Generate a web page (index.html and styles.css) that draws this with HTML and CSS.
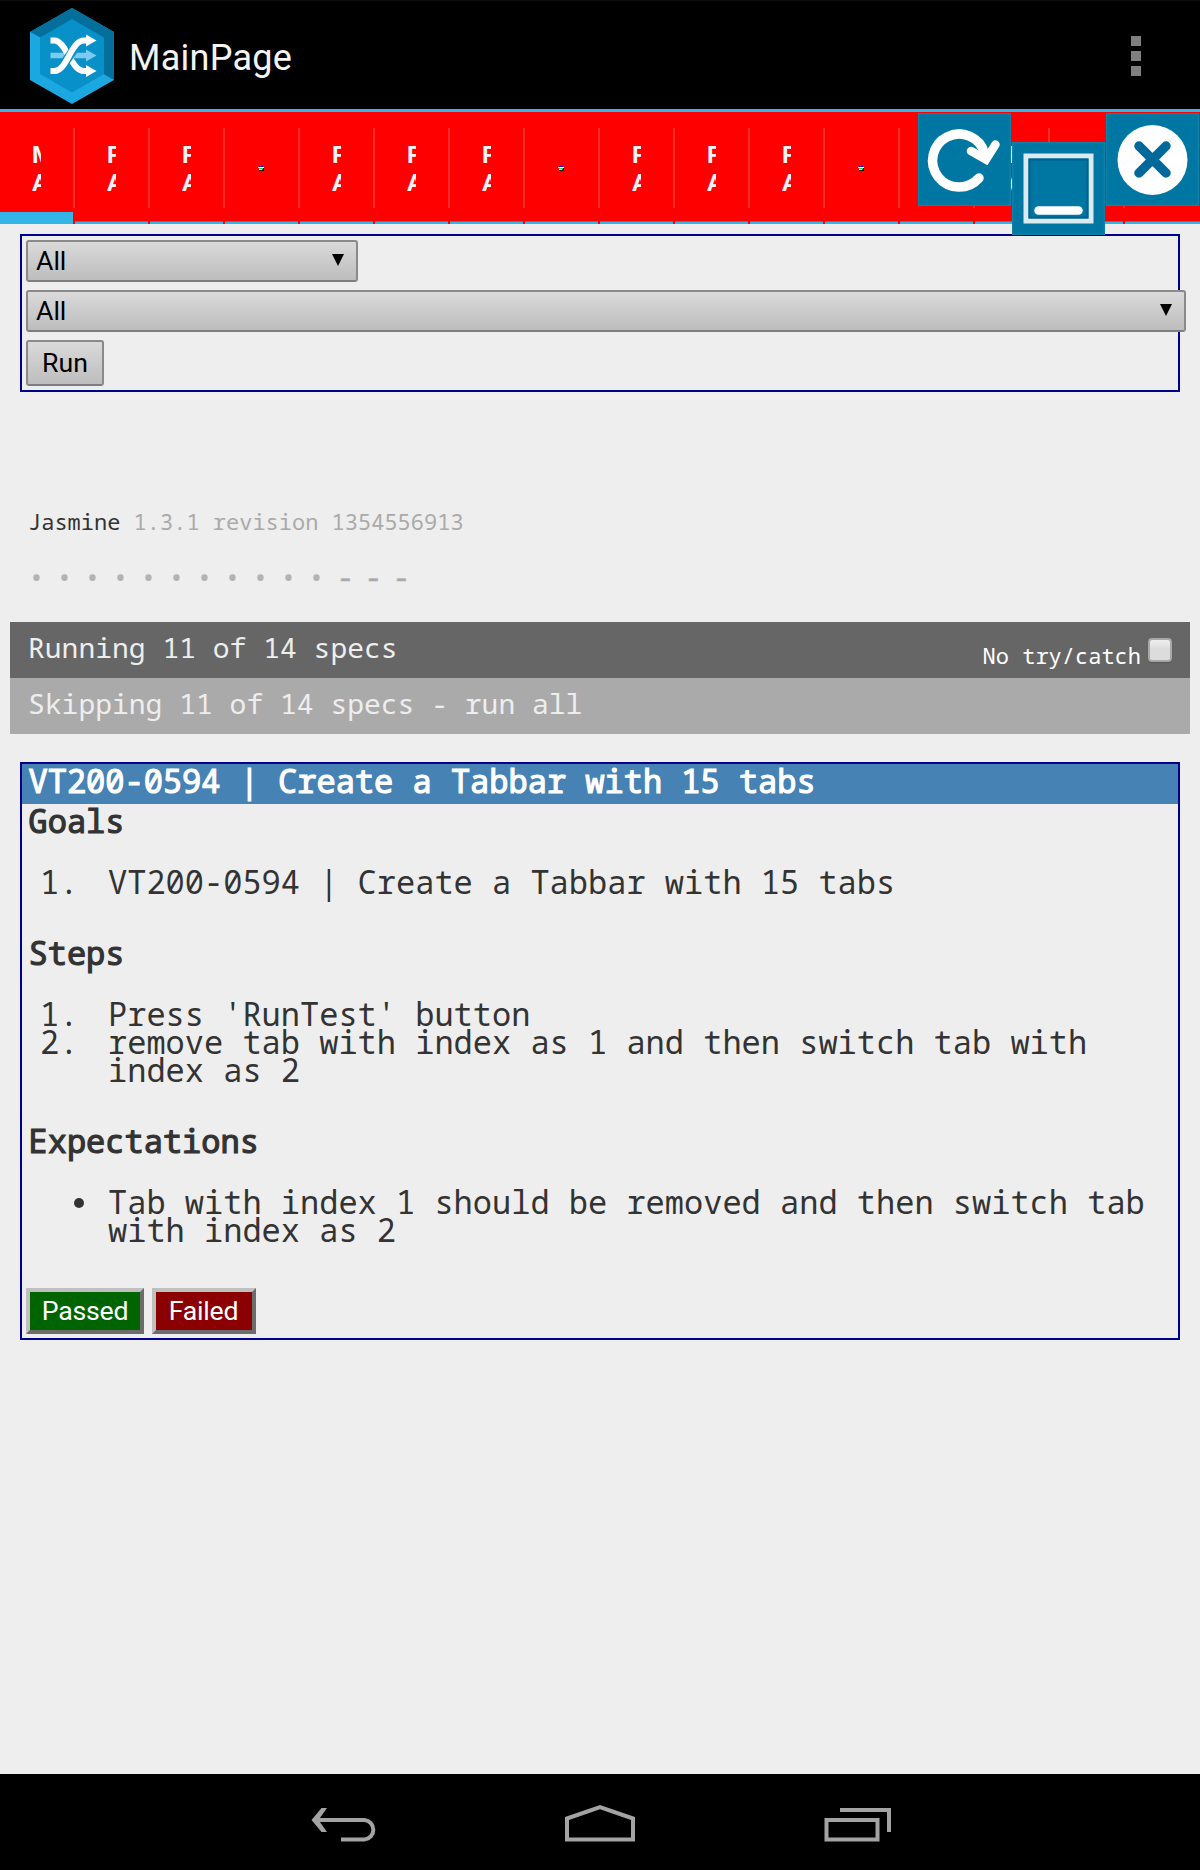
FILE: index.html
```html
<!DOCTYPE html>
<html lang="en">
<head>
<meta charset="utf-8">
<title>MainPage</title>
<link rel="stylesheet" href="styles.css">
</head>
<body>
<header class="appbar">
  <svg class="logo" width="84" height="96" viewBox="0 0 84 96">
    <path fill="#1ba8e1" d="M42 0 84 24V72L42 96 0 72V24z"/>
    <path fill="#056f9c" d="M0 24 42 0 84 24V72L42 48z"/>
    <path fill="#1ba8e1" d="M0 24 10 29.500V66z"/>
    <path fill="#0890c9" d="M42 11 74 29.500V66L42 84.500 10 66V29.500z"/>
    <path stroke="#7ccbee" stroke-width="5.500" d="M20.500 47.500H58"/>
    <path fill="#7ccbee" d="M56 41.500 66.500 47.500 56 53.500z"/>
    <g fill="none" stroke="#fff" stroke-width="6">
      <path d="M20.500 32.500h4C36 32.500 41 63 54 63h4"/>
      <path stroke="#0890c9" stroke-width="9" d="M33 57 47 37"/>
      <path d="M20.500 63h4C37 63 41 32.500 54 32.500h4"/>
    </g>
    <path fill="#fff" d="M56 26.500 66.500 32.500 56 38.500zM56 57 66.500 63 56 69z"/>
  </svg>
  <h1 class="title">MainPage</h1>
  <div class="overflow"><i></i><i></i><i></i></div>
</header>

<nav class="tabs">
  <div class="tab active"><span>M<br>A</span></div>
  <div class="tab"><span>P<br>A</span></div>
  <div class="tab"><span>P<br>A</span></div>
  <div class="tab"><svg class="dot" width="6" height="6" viewBox="0 0 6 6"><path fill="#fff" d="M0 2h6v1H0z"/><path fill="#00f" d="M1 1h4v1H1z"/><path fill="#0e4" d="M1 3h4v1H1z"/><path fill="#ff9" d="M1 4h3v1H1z"/><path fill="#111" d="M1 5h4v1H1zM5 3h1v3H5z"/></svg></div>
  <div class="tab"><span>P<br>A</span></div>
  <div class="tab"><span>P<br>A</span></div>
  <div class="tab"><span>P<br>A</span></div>
  <div class="tab"><svg class="dot" width="6" height="6" viewBox="0 0 6 6"><path fill="#fff" d="M0 2h6v1H0z"/><path fill="#00f" d="M1 1h4v1H1z"/><path fill="#0e4" d="M1 3h4v1H1z"/><path fill="#ff9" d="M1 4h3v1H1z"/><path fill="#111" d="M1 5h4v1H1zM5 3h1v3H5z"/></svg></div>
  <div class="tab"><span>P<br>A</span></div>
  <div class="tab"><span>P<br>A</span></div>
  <div class="tab"><span>P<br>A</span></div>
  <div class="tab"><svg class="dot" width="6" height="6" viewBox="0 0 6 6"><path fill="#fff" d="M0 2h6v1H0z"/><path fill="#00f" d="M1 1h4v1H1z"/><path fill="#0e4" d="M1 3h4v1H1z"/><path fill="#ff9" d="M1 4h3v1H1z"/><path fill="#111" d="M1 5h4v1H1zM5 3h1v3H5z"/></svg></div>
  <div class="tab"></div>
  <div class="tab"><span>P<br>A</span></div>
  <div class="tab"></div>
  <div class="tab last"></div>

  <div class="tool refresh">
    <svg width="93" height="93" viewBox="0 0 93 93" fill="none" stroke="#fff" stroke-width="9.500" stroke-linecap="round">
      <path d="M61 65A26.500 26.500 0 1 1 66.500 40"/>
      <path stroke-width="8.500" d="M53 38 68 46.500 77.500 31.500"/>
    </svg>
  </div>
  <div class="tool minimise">
    <svg width="93" height="93" viewBox="0 0 93 93" fill="none">
      <rect x="14" y="14" width="65" height="65" stroke="#dcebf2" stroke-width="5"/>
      <rect x="17.500" y="17.500" width="58" height="58" stroke="#00608f" stroke-width="2"/>
      <path stroke="#fff" stroke-width="8.500" stroke-linecap="round" d="M26.500 68.500H66.500"/>
    </svg>
  </div>
  <div class="tool close">
    <svg width="93" height="93" viewBox="0 0 93 93">
      <circle cx="46.500" cy="47" r="35" fill="#fff"/>
      <path stroke="#00699a" stroke-width="9.500" stroke-linecap="round" d="M33 33 60 60M60 33 33 60"/>
    </svg>
  </div>
</nav>

<main class="page">
  <section class="box filters">
    <div class="select short">All<svg width="12" height="12" viewBox="0 0 12 12"><path d="M0 0h12L6 12z"/></svg></div>
    <div class="select long">All<svg width="12" height="12" viewBox="0 0 12 12"><path d="M0 0h12L6 12z"/></svg></div>
    <button class="run">Run</button>
  </section>

  <section class="reporter">
    <div class="banner">Jasmine <span>1.3.1 revision 1354556913</span></div>
    <ul class="symbols">
      <li>•</li><li>•</li><li>•</li><li>•</li><li>•</li><li>•</li><li>•</li><li>•</li><li>•</li><li>•</li><li>•</li><li class="skip">-</li><li class="skip">-</li><li class="skip">-</li>
    </ul>
    <div class="bar running"><span>Running 11 of 14 specs</span><label class="catch">No try/catch<i class="check"></i></label></div>
    <div class="bar skipping">Skipping 11 of 14 specs - run all</div>
  </section>

  <section class="box spec">
    <h2 class="heading name">VT200-0594 | Create a Tabbar with 15 tabs</h2>
    <h3 class="heading">Goals</h3>
    <ol class="list"><li><b>1.</b><span>VT200-0594 | Create a Tabbar with 15 tabs</span></li></ol>
    <h3 class="heading">Steps</h3>
    <ol class="list">
      <li><b>1.</b><span>Press 'RunTest' button</span></li>
      <li><b>2.</b><span>remove tab with index as 1 and then switch tab with index as 2</span></li>
    </ol>
    <h3 class="heading">Expectations</h3>
    <ul class="list"><li><i class="bullet"></i><span>Tab with index 1 should be removed and then switch tab with index as 2</span></li></ul>
    <div class="actions"><button class="verdict passed">Passed</button><button class="verdict failed">Failed</button></div>
  </section>
</main>

<footer class="navbar">
  <svg width="68" height="40" viewBox="0 0 68 40" fill="none" stroke="#a3a3a3" stroke-width="4"><path d="M4 16H54.500A9.800 9.800 0 0 1 54.500 35.500H31"/><path fill="#a3a3a3" stroke="none" d="M1.500 16 11.500 4H17L8.500 16 17 28H11.500z"/></svg>
  <svg width="72" height="40" viewBox="0 0 72 40" fill="none" stroke="#a3a3a3" stroke-width="4"><path d="M3 35.500V14.500L36 3 69 14.500V35.500z"/></svg>
  <svg width="68" height="40" viewBox="0 0 68 40" fill="none" stroke="#a3a3a3" stroke-width="4"><path d="M2.500 16H53.500V35.500H2.500zM16 6H65V28"/></svg>
</footer>
</body>
</html>
```

FILE: styles.css
```css
* { box-sizing: border-box; }
body {
  margin: 0;
  width: 1200px;
  height: 1870px;
  display: flex;
  flex-direction: column;
  background: #eee;
  color: #333;
  font-family: "Noto Sans Mono", "Droid Sans Mono", "DejaVu Sans Mono", monospace;
  overflow: hidden;
}
h1, h2, h3, ul, ol { margin: 0; padding: 0; }
ul, ol { list-style: none; }
svg { display: block; }

.appbar {
  height: 112px;
  padding: 0 59px 0 30px;
  display: flex;
  align-items: center;
  background: #000;
  border-top: 1px solid #0d0d0d;
  border-bottom: 3px solid #33b5e5;
}
.logo { margin-top: 1px; }
.title {
  margin-left: 15px;
  padding-top: 6px;
  flex: 1;
  font: 400 36px/44px Roboto, sans-serif;
  letter-spacing: 0.250px;
  color: #f3f3f3;
}
.overflow { display: flex; flex-direction: column; gap: 5px; padding-top: 1px; }
.overflow i { width: 10px; height: 10px; background: #808080; }

.tabs { position: relative; display: flex; height: 112px; background: #f00; }
.tab {
  flex: none;
  width: 75px;
  height: 112px;
  display: flex;
  justify-content: center;
  align-items: center;
  padding: 0 2px 13px 0;
  background:
    linear-gradient(#ff2a2a, #ff2a2a) 73px 16px / 2px 80px no-repeat,
    linear-gradient(#33b5e5, #33b5e5) 0 110px / 73px 2px no-repeat,
    linear-gradient(#c0505a, #c0505a) 0 109px / 73px 1px no-repeat;
}
.tab.active {
  background:
    linear-gradient(#ff2a2a, #ff2a2a) 73px 16px / 2px 80px no-repeat,
    linear-gradient(#33b5e5, #33b5e5) 0 100px / 73px 12px no-repeat;
}
.tab.last {
  background:
    linear-gradient(#33b5e5, #33b5e5) 0 110px / 75px 2px no-repeat,
    linear-gradient(#c0505a, #c0505a) 0 109px / 75px 1px no-repeat;
}
.tab span {
  width: 9px;
  height: 56px;
  margin-top: 15px;
  overflow: hidden;
  font: 700 24px/28px Roboto, sans-serif;
  color: #f3f3f3;
}
.tab .dot { margin: 13px 1px 0 0; }

.tool {
  position: absolute;
  width: 93px;
  height: 93px;
  background: #0077a3;
  box-shadow: inset 0 0 2px 1px #1684ab;
}
.refresh { left: 918px; top: 1px; }
.minimise { left: 1012px; top: 30px; }
.close { left: 1106px; top: 1px; }

.page { flex: 1; padding: 10px; }
.box { margin: 0 10px; border: 2px solid #00008b; }

.filters {
  height: 158px;
  padding: 4px;
  display: flex;
  flex-direction: column;
  align-items: flex-start;
  gap: 8px;
}
.select, .run {
  font: 400 26.670px/38px Roboto, sans-serif;
  color: #000;
  border: 2px solid #8a8a8a;
  border-bottom-color: #7e7e7e;
  border-radius: 3px;
  background: linear-gradient(#dadada, #bdbdbd);
}
.select {
  height: 42px;
  padding: 0 12px 0 8px;
  display: flex;
  justify-content: space-between;
}
.select svg { margin-top: 12px; }
.short { width: 332px; }
.long { width: 1160px; }
.run { width: 78px; height: 46px; padding: 0; }

.banner { margin-top: 115px; padding-left: 18px; font-size: 22px; line-height: 28px; }
.banner span { color: #aaa; }
.symbols { display: flex; height: 28px; margin: 28px 0 31px 18px; color: #b3b3b3; }
.symbols li { width: 28px; font-size: 28px; line-height: 28px; }
.symbols .skip { color: #aaa; -webkit-text-stroke: 0.700px #aaa; padding-left: 1px; margin-top: -1px; }
.bar { height: 56px; padding: 0 18px; font-size: 28px; line-height: 50px; color: #eee; }
.running { display: flex; justify-content: space-between; background: #666; }
.skipping { background: #aaa; }
.catch { display: flex; gap: 7px; font-size: 22px; line-height: 66px; height: 56px; color: #fff; }
.check {
  width: 24px;
  height: 24px;
  margin-top: 16px;
  border: 2px solid #a8a8a8;
  border-radius: 4px;
  background: linear-gradient(#eee, #dcdcdc 45%);
  box-shadow: 0 1px 1px #555;
}

.spec { margin-top: 28px; height: 578px; }
.heading {
  height: 40px;
  padding-left: 6.500px;
  font-size: 32px;
  line-height: 34px;
  font-weight: 400;
  -webkit-text-stroke: 1.200px currentColor;
}
.name { background: #4682b4; color: #fff; }
.list { margin: 24px 0 40px; font-size: 32px; line-height: 28px; }
.list li { display: grid; grid-template-columns: 86px 1fr; }
.list b { font-weight: 400; padding-left: 18px; }
.bullet { width: 10px; height: 10px; margin: 10px 0 0 52px; border-radius: 5px; background: #333; }
.actions { display: flex; gap: 8px; margin: 44px 0 0 4px; }
.verdict {
  height: 46px;
  padding: 0;
  font: 400 26.670px/38px Roboto, sans-serif;
  letter-spacing: -0.250px;
  color: #fff;
  border: 4px solid;
  border-color: #c0c0c0 #6c6c6c #6c6c6c #c0c0c0;
}
.passed { width: 118px; background: #006400; }
.failed { width: 104px; padding-right: 1px; background: #8b0000; }

.navbar {
  height: 96px;
  padding: 30px 308px 0 310px;
  display: flex;
  justify-content: space-between;
  background: #000;
}
.navbar svg:nth-child(2) { margin-right: 3px; }
```
